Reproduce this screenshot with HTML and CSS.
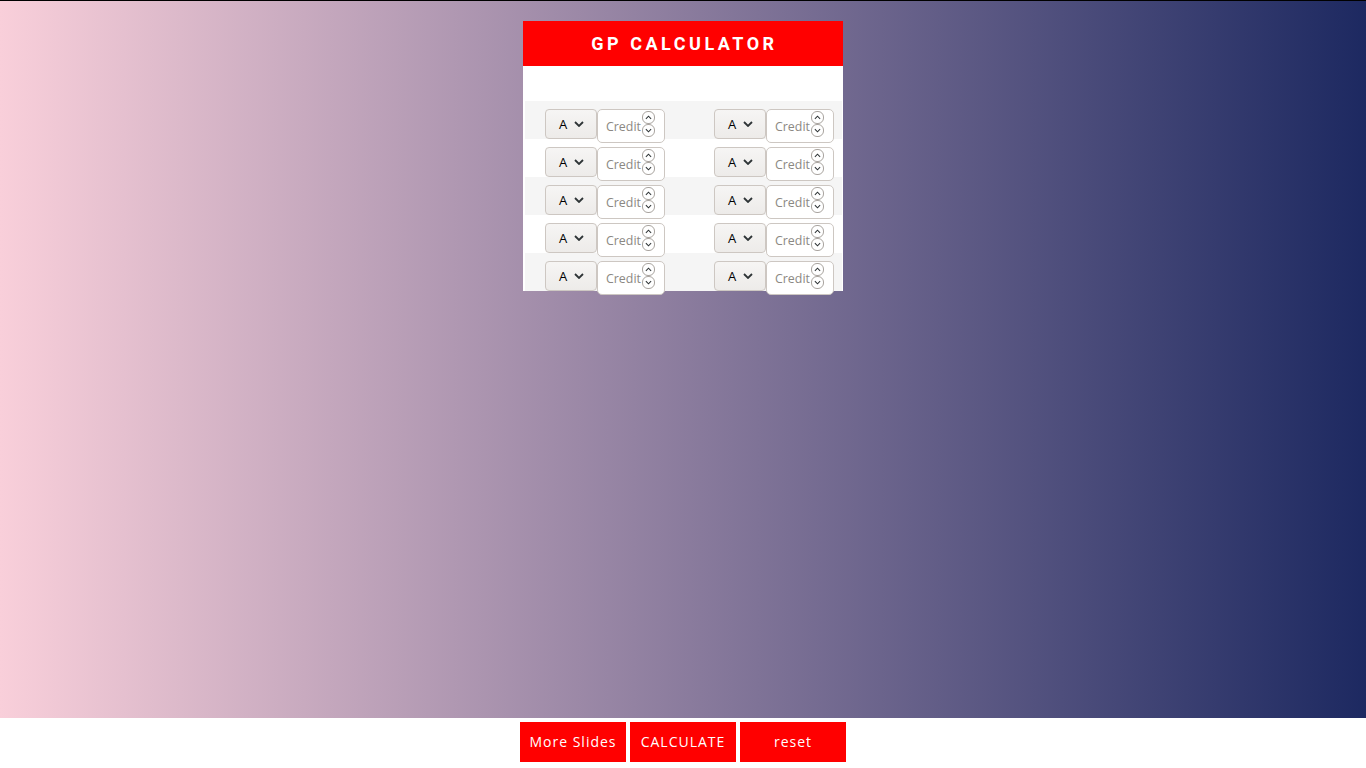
FILE: index.html
```html
<!DOCTYPE html>
<html lang="en">
<head>
<meta charset="utf-8">
<title>GP Calculator</title>
<link rel="stylesheet" href="styles.css">
</head>
<body>
<main class="stage">
  <section class="card">
    <header class="card-head">GP CALCULATOR</header>
    <div class="card-gap"></div>
    <div class="rows">
      <div class="row odd">
        <div class="pair">
          <div class="grade"><span>A</span><svg class="chev" viewBox="0 0 10 6" width="10" height="6"><path d="M1 1l4 4 4-4" fill="none" stroke="#2e3436" stroke-width="1.8"/></svg></div>
          <div class="credit"><input type="text" placeholder="Credit"><div class="spin"><span class="up"><svg viewBox="0 0 8 5" width="7" height="5"><path d="M1 4l3-3 3 3" fill="none" stroke="#2e3436" stroke-width="1.2"/></svg></span><span class="down"><svg viewBox="0 0 8 5" width="7" height="5"><path d="M1 1l3 3 3-3" fill="none" stroke="#2e3436" stroke-width="1.2"/></svg></span></div></div>
        </div>
        <div class="pair">
          <div class="grade"><span>A</span><svg class="chev" viewBox="0 0 10 6" width="10" height="6"><path d="M1 1l4 4 4-4" fill="none" stroke="#2e3436" stroke-width="1.8"/></svg></div>
          <div class="credit"><input type="text" placeholder="Credit"><div class="spin"><span class="up"><svg viewBox="0 0 8 5" width="7" height="5"><path d="M1 4l3-3 3 3" fill="none" stroke="#2e3436" stroke-width="1.2"/></svg></span><span class="down"><svg viewBox="0 0 8 5" width="7" height="5"><path d="M1 1l3 3 3-3" fill="none" stroke="#2e3436" stroke-width="1.2"/></svg></span></div></div>
        </div>
      </div>
      <div class="row">
        <div class="pair">
          <div class="grade"><span>A</span><svg class="chev" viewBox="0 0 10 6" width="10" height="6"><path d="M1 1l4 4 4-4" fill="none" stroke="#2e3436" stroke-width="1.8"/></svg></div>
          <div class="credit"><input type="text" placeholder="Credit"><div class="spin"><span class="up"><svg viewBox="0 0 8 5" width="7" height="5"><path d="M1 4l3-3 3 3" fill="none" stroke="#2e3436" stroke-width="1.2"/></svg></span><span class="down"><svg viewBox="0 0 8 5" width="7" height="5"><path d="M1 1l3 3 3-3" fill="none" stroke="#2e3436" stroke-width="1.2"/></svg></span></div></div>
        </div>
        <div class="pair">
          <div class="grade"><span>A</span><svg class="chev" viewBox="0 0 10 6" width="10" height="6"><path d="M1 1l4 4 4-4" fill="none" stroke="#2e3436" stroke-width="1.8"/></svg></div>
          <div class="credit"><input type="text" placeholder="Credit"><div class="spin"><span class="up"><svg viewBox="0 0 8 5" width="7" height="5"><path d="M1 4l3-3 3 3" fill="none" stroke="#2e3436" stroke-width="1.2"/></svg></span><span class="down"><svg viewBox="0 0 8 5" width="7" height="5"><path d="M1 1l3 3 3-3" fill="none" stroke="#2e3436" stroke-width="1.2"/></svg></span></div></div>
        </div>
      </div>
      <div class="row odd">
        <div class="pair">
          <div class="grade"><span>A</span><svg class="chev" viewBox="0 0 10 6" width="10" height="6"><path d="M1 1l4 4 4-4" fill="none" stroke="#2e3436" stroke-width="1.8"/></svg></div>
          <div class="credit"><input type="text" placeholder="Credit"><div class="spin"><span class="up"><svg viewBox="0 0 8 5" width="7" height="5"><path d="M1 4l3-3 3 3" fill="none" stroke="#2e3436" stroke-width="1.2"/></svg></span><span class="down"><svg viewBox="0 0 8 5" width="7" height="5"><path d="M1 1l3 3 3-3" fill="none" stroke="#2e3436" stroke-width="1.2"/></svg></span></div></div>
        </div>
        <div class="pair">
          <div class="grade"><span>A</span><svg class="chev" viewBox="0 0 10 6" width="10" height="6"><path d="M1 1l4 4 4-4" fill="none" stroke="#2e3436" stroke-width="1.8"/></svg></div>
          <div class="credit"><input type="text" placeholder="Credit"><div class="spin"><span class="up"><svg viewBox="0 0 8 5" width="7" height="5"><path d="M1 4l3-3 3 3" fill="none" stroke="#2e3436" stroke-width="1.2"/></svg></span><span class="down"><svg viewBox="0 0 8 5" width="7" height="5"><path d="M1 1l3 3 3-3" fill="none" stroke="#2e3436" stroke-width="1.2"/></svg></span></div></div>
        </div>
      </div>
      <div class="row">
        <div class="pair">
          <div class="grade"><span>A</span><svg class="chev" viewBox="0 0 10 6" width="10" height="6"><path d="M1 1l4 4 4-4" fill="none" stroke="#2e3436" stroke-width="1.8"/></svg></div>
          <div class="credit"><input type="text" placeholder="Credit"><div class="spin"><span class="up"><svg viewBox="0 0 8 5" width="7" height="5"><path d="M1 4l3-3 3 3" fill="none" stroke="#2e3436" stroke-width="1.2"/></svg></span><span class="down"><svg viewBox="0 0 8 5" width="7" height="5"><path d="M1 1l3 3 3-3" fill="none" stroke="#2e3436" stroke-width="1.2"/></svg></span></div></div>
        </div>
        <div class="pair">
          <div class="grade"><span>A</span><svg class="chev" viewBox="0 0 10 6" width="10" height="6"><path d="M1 1l4 4 4-4" fill="none" stroke="#2e3436" stroke-width="1.8"/></svg></div>
          <div class="credit"><input type="text" placeholder="Credit"><div class="spin"><span class="up"><svg viewBox="0 0 8 5" width="7" height="5"><path d="M1 4l3-3 3 3" fill="none" stroke="#2e3436" stroke-width="1.2"/></svg></span><span class="down"><svg viewBox="0 0 8 5" width="7" height="5"><path d="M1 1l3 3 3-3" fill="none" stroke="#2e3436" stroke-width="1.2"/></svg></span></div></div>
        </div>
      </div>
      <div class="row odd">
        <div class="pair">
          <div class="grade"><span>A</span><svg class="chev" viewBox="0 0 10 6" width="10" height="6"><path d="M1 1l4 4 4-4" fill="none" stroke="#2e3436" stroke-width="1.8"/></svg></div>
          <div class="credit"><input type="text" placeholder="Credit"><div class="spin"><span class="up"><svg viewBox="0 0 8 5" width="7" height="5"><path d="M1 4l3-3 3 3" fill="none" stroke="#2e3436" stroke-width="1.2"/></svg></span><span class="down"><svg viewBox="0 0 8 5" width="7" height="5"><path d="M1 1l3 3 3-3" fill="none" stroke="#2e3436" stroke-width="1.2"/></svg></span></div></div>
        </div>
        <div class="pair">
          <div class="grade"><span>A</span><svg class="chev" viewBox="0 0 10 6" width="10" height="6"><path d="M1 1l4 4 4-4" fill="none" stroke="#2e3436" stroke-width="1.8"/></svg></div>
          <div class="credit"><input type="text" placeholder="Credit"><div class="spin"><span class="up"><svg viewBox="0 0 8 5" width="7" height="5"><path d="M1 4l3-3 3 3" fill="none" stroke="#2e3436" stroke-width="1.2"/></svg></span><span class="down"><svg viewBox="0 0 8 5" width="7" height="5"><path d="M1 1l3 3 3-3" fill="none" stroke="#2e3436" stroke-width="1.2"/></svg></span></div></div>
        </div>
      </div>
    </div>
  </section>
</main>
<footer class="actions">
  <button class="btn" type="button">More Slides</button>
  <button class="btn" type="button">CALCULATE</button>
  <button class="btn" type="button">reset</button>
</footer>
</body>
</html>
```
FILE: styles.css
```css
* { box-sizing: border-box; }
html, body { margin: 0; padding: 0; }
body {
  background: #fff;
  font-family: "Open Sans", "Liberation Sans", sans-serif;
}
.stage {
  height: 718px;
  border-top: 1px solid #000;
  background: linear-gradient(to right, #f9cfda 0%, #1d2961 100%);
  padding-top: 20px;
}
.card {
  width: 320px;
  margin: 0 auto;
  background: #fff;
}
.card-head {
  height: 45px;
  background: #ff0000;
  color: #fff;
  font-family: Roboto, "Liberation Sans", sans-serif;
  font-weight: 700;
  font-size: 18px;
  letter-spacing: 3.5px;
  display: flex;
  align-items: center;
  justify-content: center;
  padding-left: 3px;
}
.card-gap { height: 35px; }
.rows { padding: 0 1px 0 2px; }
.row {
  height: 38px;
  display: flex;
  align-items: flex-start;
  padding: 8px 0 0 20px;
  gap: 49px;
}
.row.odd { background: #f5f5f5; }
.pair { display: flex; }
.grade {
  width: 52px;
  height: 30px;
  border: 1px solid #cdc7c2;
  border-radius: 4px;
  background: linear-gradient(#f6f5f4, #edebe9);
  display: flex;
  align-items: center;
  padding-left: 13px;
  gap: 7px;
  font-size: 13px;
  color: #000;
}
.grade span { line-height: 1; }
.chev { display: block; }
.credit {
  position: relative;
  width: 68px;
  height: 34px;
}
.credit input {
  width: 100%;
  height: 100%;
  border: 1px solid #cdc7c2;
  border-radius: 5px;
  background: #fff;
  padding: 0 0 0 8px;
  font-family: "Open Sans", "Liberation Sans", sans-serif;
  font-size: 12.4px;
  color: #333;
  outline: none;
}
.credit input::placeholder { color: #8b8883; opacity: 1; }
.spin {
  position: absolute;
  left: 45px;
  top: 2px;
  display: flex;
  flex-direction: column;
}
.spin span {
  width: 13px;
  height: 13px;
  border: 1px solid #a9a49f;
  border-radius: 6px;
  display: flex;
  align-items: center;
  justify-content: center;
  background: #fff;
}
.spin svg { display: block; }
.actions {
  height: 50px;
  display: flex;
  justify-content: center;
  gap: 4px;
  padding-top: 4px;
}
.btn {
  width: 106px;
  height: 40px;
  border: 0;
  background: #ff0000;
  color: #fff;
  font-family: "Open Sans", "Liberation Sans", sans-serif;
  font-size: 14px;
  letter-spacing: 1px;
  padding: 0 0 2px;
}
```
